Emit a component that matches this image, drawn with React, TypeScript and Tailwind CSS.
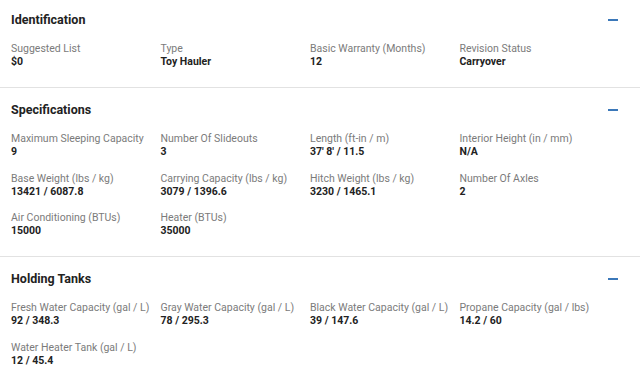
type Spec = { label: string; value: string };

type Section = { title: string; items: Spec[] };

const sections: Section[] = [
  {
    title: "Identification",
    items: [
      { label: "Suggested List", value: "$0" },
      { label: "Type", value: "Toy Hauler" },
      { label: "Basic Warranty (Months)", value: "12" },
      { label: "Revision Status", value: "Carryover" },
    ],
  },
  {
    title: "Specifications",
    items: [
      { label: "Maximum Sleeping Capacity", value: "9" },
      { label: "Number Of Slideouts", value: "3" },
      { label: "Length (ft-in / m)", value: "37' 8' / 11.5" },
      { label: "Interior Height (in / mm)", value: "N/A" },
      { label: "Base Weight (lbs / kg)", value: "13421 / 6087.8" },
      { label: "Carrying Capacity (lbs / kg)", value: "3079 / 1396.6" },
      { label: "Hitch Weight (lbs / kg)", value: "3230 / 1465.1" },
      { label: "Number Of Axles", value: "2" },
      { label: "Air Conditioning (BTUs)", value: "15000" },
      { label: "Heater (BTUs)", value: "35000" },
    ],
  },
  {
    title: "Holding Tanks",
    items: [
      { label: "Fresh Water Capacity (gal / L)", value: "92 / 348.3" },
      { label: "Gray Water Capacity (gal / L)", value: "78 / 295.3" },
      { label: "Black Water Capacity (gal / L)", value: "39 / 147.6" },
      { label: "Propane Capacity (gal / lbs)", value: "14.2 / 60" },
      { label: "Water Heater Tank (gal / L)", value: "12 / 45.4" },
    ],
  },
];

function SpecSection({ section, first }: { section: Section; first: boolean }) {
  return (
    <section
      className={`border-b border-[#e2e2e2] pl-[11px] pr-[22px] pb-[19px] ${
        first ? "pt-[12px]" : "pt-[14px]"
      }`}
    >
      {/* Header row with collapse toggle */}
      <div className="flex items-center justify-between">
        <h2 className="text-[12.5px] leading-[15px] font-bold text-[#222]">
          {section.title}
        </h2>
        <span className="block h-[2px] w-[10px] bg-[#3b78b9]" aria-hidden="true" />
      </div>

      <div className="mt-[15px] grid grid-cols-4 gap-y-[13.5px] w-[598px]">
        {section.items.map((it) => (
          <div key={it.label} className="flex flex-col">
            <span className="text-[10.5px] leading-[13px] text-[#7b7b7b] whitespace-nowrap">
              {it.label}
            </span>
            <span className="text-[10.5px] leading-[13px] font-bold text-[#222]">
              {it.value}
            </span>
          </div>
        ))}
      </div>
    </section>
  );
}

export default function App() {
  return (
    <div
      className="w-[640px] h-[384px] overflow-hidden bg-white"
      style={{ fontFamily: "Roboto, 'Liberation Sans', sans-serif" }}
    >
      {sections.map((s, i) => (
        <SpecSection key={s.title} section={s} first={i === 0} />
      ))}
    </div>
  );
}
